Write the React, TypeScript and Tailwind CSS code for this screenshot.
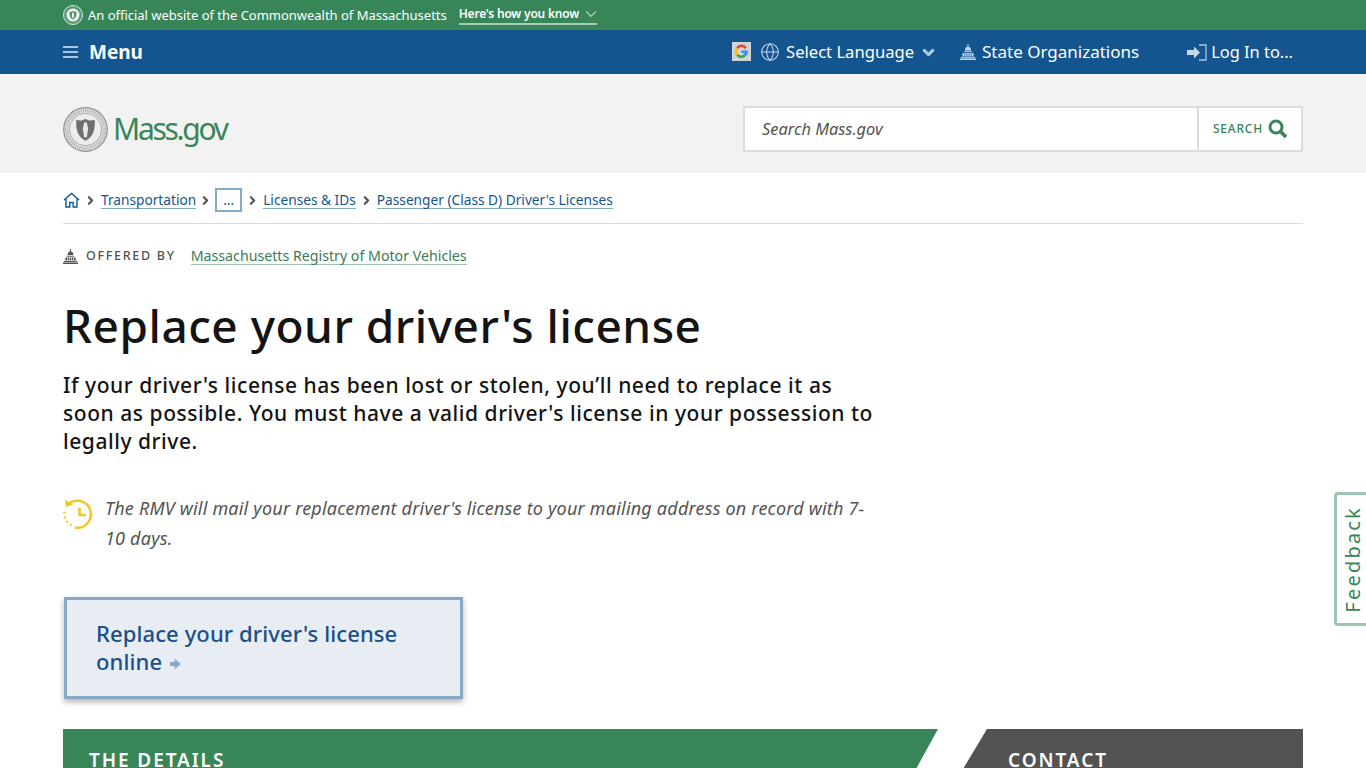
import React from "react";
import { ChevronDown, ChevronRight, Globe } from "lucide-react";

const Seal = ({ size }: { size: number }) => (
  <svg width={size} height={size} viewBox="0 0 44 44" className="shrink-0">
    <circle cx="22" cy="22" r="21.300" fill="#e4e4e2" stroke="#8f8f8f" strokeWidth="1.200" />
    <circle cx="22" cy="22" r="18.500" fill="none" stroke="#9a9a9a" strokeWidth="3.400" strokeDasharray="1 1" opacity="0.7" />
    <circle cx="22" cy="22" r="15.800" fill="#ececea" stroke="#8f8f8f" strokeWidth="0.700" />
    <path d="M13 12.500c3.500 1.300 6.500 1 9-1 2.500 2 5.500 2.300 9 1 .5 9.500-1 16.500-9 20.500-8-4-9.500-11-9-20.500z" fill="#6f6f6f" />
    <path d="M22 15c1.300 0 1.700 1.300 1.700 2.200l.9 3.800-1.300 8.500h-2.600L19.400 21l.9-3.800c0-.9.400-2.200 1.700-2.200z" fill="#e8e8e6" />
  </svg>
);

const Capitol = ({ color, size }: { color: string; size: number }) => (
  <svg width={size} height={size} viewBox="0 0 16 16" className="shrink-0" fill={color}>
    <rect x="7.500" y="0" width="1" height="2.500" />
    <path d="M4.800 6.500C5 4 6.300 2.500 8 2.500s3 1.500 3.200 4z" />
    <rect x="4" y="7.200" width="8" height="1" />
    <path d="M2.500 9h2v3h-2zM5.200 9h1.400v3H5.200zM7.300 9h1.400v3H7.300zM9.400 9h1.400v3H9.400zM11.500 9h2v3h-2z" />
    <rect x="1" y="12.600" width="14" height="1.200" />
    <rect x="0" y="14.400" width="16" height="1.600" />
  </svg>
);

const crumbs = ["Transportation", "...", "Licenses & IDs", "Passenger (Class D) Driver's Licenses"];

const Crumb = () => <ChevronRight size={13} strokeWidth={4} className="shrink-0 text-[#535353]" />;

export default function App() {
  return (
    <div className="relative h-screen overflow-hidden bg-white font-['Noto_Sans',sans-serif] text-[#141414]">
      {/* official banner */}
      <div className="flex h-[30px] items-center bg-[#388557] pl-[63px] text-white">
        <svg width="20" height="20" viewBox="0 0 20 20" className="shrink-0">
          <circle cx="10" cy="10" r="9.500" fill="#5b9c76" stroke="#d8e8de" strokeWidth="1" />
          <circle cx="10" cy="10" r="6.500" fill="#f2f6f3" />
          <path d="M6.500 6.500c1.500.5 2.500.3 3.500-.5 1 .8 2 1 3.500.5.2 4-.5 6.500-3.500 8-3-1.500-3.700-4-3.500-8z" fill="#4f8f6a" />
          <path d="M10 7.500c.6 0 .8.600.8 1l.3 1.800-.6 3h-1l-.6-3 .3-1.800c0-.4.200-1 .8-1z" fill="#fff" />
        </svg>
        <span className="ml-[5px] text-[13px] leading-none tracking-[-0.02px]">An official website of the Commonwealth of Massachusetts</span>
        <span className="ml-3 flex items-center border-b-2 border-[#a6cdb5] pb-px text-xs font-semibold leading-[15px] tracking-[-0.2px]">
          Here's how you know
          <ChevronDown size={18} strokeWidth={1.75} className="-my-px ml-[3px] -mr-[3px] text-[#a6cdb5]" />
        </span>
      </div>

      {/* utility nav */}
      <div className="flex h-11 items-center bg-[#14558f] pl-[63px] pr-[73px] text-white">
        <div className="flex w-[15px] flex-col gap-[3px]">
          <span className="h-0.5 bg-[#a8c5e2]" />
          <span className="h-0.5 bg-[#a8c5e2]" />
          <span className="h-0.5 bg-[#a8c5e2]" />
        </div>
        <span className="ml-[11px] text-[19px] font-bold leading-none">Menu</span>
        <div className="ml-auto flex items-center">
          <svg width="19" height="19" viewBox="0 0 18 18" className="-mt-px shrink-0">
            <rect width="18" height="18" fill="#cfd6d8" />
            <path d="M14 5.200A6 6 0 0 0 4 5l2 1.700a3.300 3.300 0 0 1 6-.1z" fill="#ea4335" />
            <path d="M4 5a6 6 0 0 0 0 8l2-1.700a3.300 3.300 0 0 1 0-4.600z" fill="#fbbc05" />
            <path d="M4 13a6 6 0 0 0 9 .4l-2-1.600a3.300 3.300 0 0 1-5-.5z" fill="#34a853" />
            <path d="M13 13.400A6 6 0 0 0 15 8H9v2.500h3.200a3 3 0 0 1-1.200 1.300z" fill="#4285f4" />
          </svg>
          <Globe size={20} strokeWidth={1.25} className="ml-[9px] text-[#c5d7ea]" />
          <span className="ml-[6px] text-[16.600px] leading-none">Select Language</span>
          <ChevronDown size={17} strokeWidth={4.5} className="ml-[6px] text-[#a8c5e2]" />
          <span className="ml-[23px]">
            <Capitol color="#c5d7ea" size={16} />
          </span>
          <span className="-mt-px ml-[6px] text-[17px] leading-none">State Organizations</span>
          <svg width="20" height="17" viewBox="0 0 20 17" className="ml-[48px] shrink-0" fill="none">
            <path d="M12 1h7v15h-7" stroke="#a8c5e2" strokeWidth="1.300" />
            <path d="M0 6h7V2.500L13 8.500l-6 6V11H0z" fill="#c5d7ea" />
          </svg>
          <span className="ml-1 text-[16.400px] leading-none">Log In to...</span>
        </div>
      </div>

      {/* site header */}
      <div className="flex h-[99px] items-center justify-between bg-[#f2f2f2] px-[63px] pt-[11px]">
        <div className="flex items-center">
          <Seal size={45} />
          <span className="ml-[5px] text-[30px] leading-none tracking-[-2.300px] text-[#388557]">Mass.gov</span>
        </div>
        <div className="flex h-[46px] w-[560px] border-2 border-[#dcdcdc] bg-white">
          <div className="flex flex-1 items-center pl-[17px] text-[16.400px] italic text-[#535353]">Search Mass.gov</div>
          <div className="flex w-[104px] items-center justify-center gap-[5px] border-l-2 border-[#dcdcdc] pl-px">
            <span className="text-xs font-medium tracking-[0.8px] text-[#388557]">SEARCH</span>
            <svg width="20" height="20" viewBox="0 0 20 20" fill="none" stroke="#388557" className="shrink-0">
              <circle cx="8" cy="8" r="6" strokeWidth="3" />
              <path d="M12.500 12.500L18 18" strokeWidth="3.600" />
            </svg>
          </div>
        </div>
      </div>

      <main className="px-[63px]">
        {/* breadcrumbs */}
        <nav className="flex h-[51px] items-center border-b border-[#dcdcdc] pt-[4px] text-[13.700px]">
          <svg width="17" height="16" viewBox="0 0 17 16" fill="none" stroke="#14558f" strokeWidth="1.400" className="shrink-0">
            <path d="M1 8l7.500-6.500L16 8" />
            <path d="M3 7v8h3.800v-4.500h3.400V15H14V7" />
          </svg>
          {crumbs.map((c) =>
            c === "..." ? (
              <span key={c} className="flex items-center">
                <span className="mx-[3px]"><Crumb /></span>
                <span className="flex h-6 w-[27px] items-center justify-center border-2 border-[#88a8c8] text-[#14558f]">...</span>
              </span>
            ) : (
              <span key={c} className="flex items-center">
                <span className="mx-[4px]"><Crumb /></span>
                <span className="border-b border-[#88a8c8] leading-[16px] text-[#14558f]">{c}</span>
              </span>
            )
          )}
        </nav>

        {/* offered by */}
        <div className="mt-[22px] flex h-5 items-center">
          <Capitol color="#535353" size={15} />
          <span className="ml-2 text-[12.500px] font-medium tracking-[1.700px] text-[#535353]">OFFERED BY</span>
          <span className="ml-[15px] -mt-px border-b border-[#9fc4ad] text-[14.200px] leading-[17px] text-[#3c7a56]">
            Massachusetts Registry of Motor Vehicles
          </span>
        </div>

        <h1 className="mt-[29px] text-[46px] font-medium leading-[60px] tracking-[0.5px]">Replace your driver's license</h1>
        <p className="mt-4 w-[820px] text-[21px] font-medium leading-[28px] tracking-[0.55px]">
          If your driver's license has been lost or stolen, you’ll need to replace it as soon as possible. You must have a valid driver's license in your possession to legally drive.
        </p>

        {/* time notice */}
        <div className="mt-[38px] flex w-[820px] items-start">
          <svg width="31" height="32" viewBox="0 0 31 32" fill="none" stroke="#f6c51b" strokeWidth="2.400" className="mt-[5px] shrink-0">
            <path d="M5 6.500A13.500 13.500 0 1 1 12 29.500" />
            <path d="M2 1.500l1 7.500 7-2.500z" fill="#f6c51b" stroke="none" />
            <path d="M8.500 27.500A13.500 13.500 0 0 1 1.500 14" strokeDasharray="1.800 3" />
            <path d="M16.500 9.500V17H23" />
          </svg>
          <p className="ml-[11px] text-lg italic leading-[30px] tracking-[0.2px] text-[#535353]">
            The RMV will mail your replacement driver's license to your mailing address on record with 7-10 days.
          </p>
        </div>

        {/* call to action */}
        <div className="ml-px mt-[44px] flex h-[102px] w-[399px] items-center border-[3px] border-[#88a8c8] bg-[#e8edf4] pb-[2px] pl-[29px] pr-10 shadow-[0_3px_6px_rgba(0,0,0,0.3)]">
          <p className="text-[22px] font-medium leading-[28px] tracking-[0.1px] text-[#1a4f8b]">
            Replace your driver's license online
            <svg width="11" height="12" viewBox="0 0 11 12" className="ml-2 inline-block" fill="#88a8c8">
              <path d="M0 4h4.500V0.500L11 6l-6.500 5.500V8H0z" />
            </svg>
          </p>
        </div>

        {/* section headers */}
        <div className="mt-[30px] flex">
          <div className="flex h-[60px] w-[875px] items-start bg-[#388557] pl-[26px] pt-[19px] text-[19px] font-semibold leading-[24px] tracking-[1.900px] text-white [clip-path:polygon(0_0,875px_0,842px_60px,0_60px)]">
            THE DETAILS
          </div>
          <div className="ml-auto flex h-[60px] w-[339px] items-start bg-[#535353] pl-[44px] pt-[19px] text-[19px] font-semibold leading-[24px] tracking-[1.900px] text-white [clip-path:polygon(23px_0,100%_0,100%_100%,-13px_100%)]">
            CONTACT
          </div>
        </div>
      </main>

      {/* feedback tab */}
      <div className="absolute right-0 top-[492px] flex h-[134px] w-8 items-center justify-center rounded-l-[4px] border-y-[3px] border-l-[3px] border-[#9fc4ad] bg-white pl-[3px]">
        <span className="rotate-180 text-xl leading-none tracking-[2.200px] text-[#388557] [writing-mode:vertical-rl]">Feedback</span>
      </div>
    </div>
  );
}
